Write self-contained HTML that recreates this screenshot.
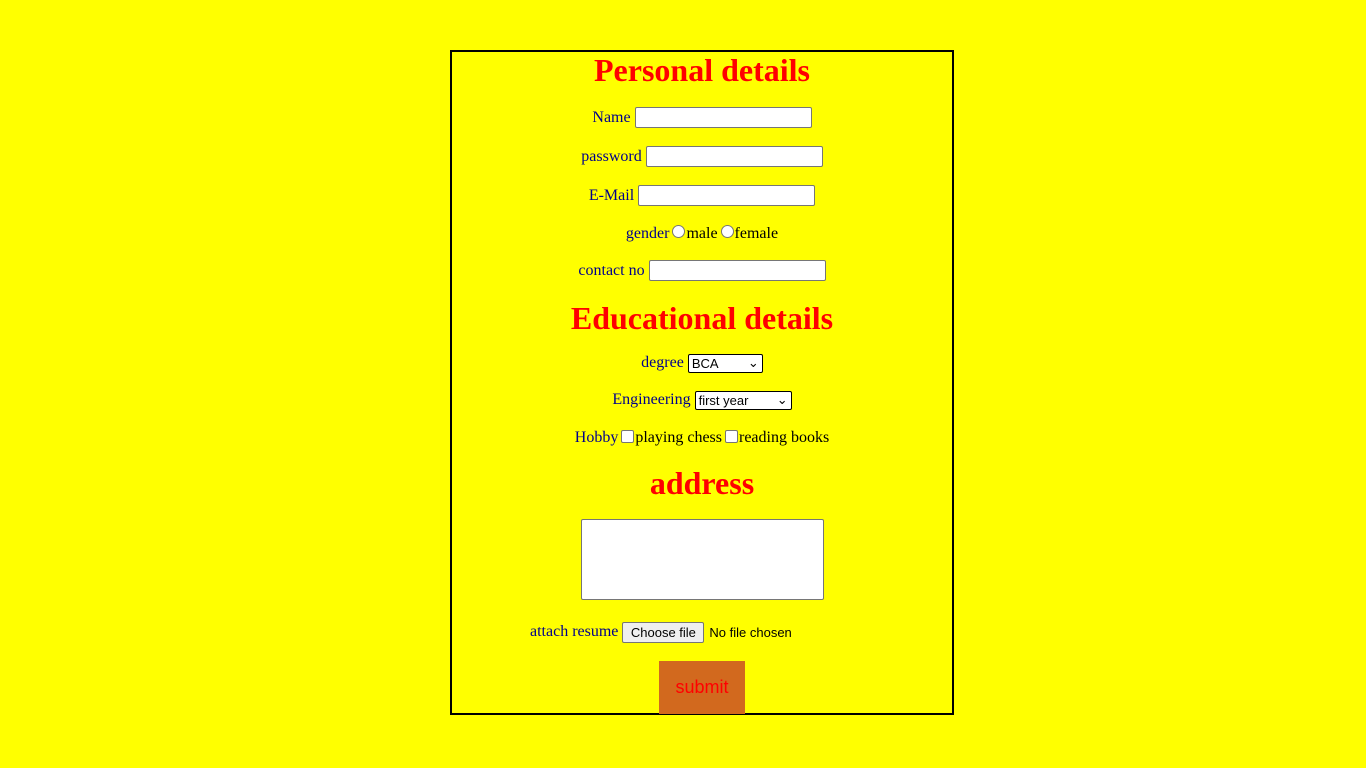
<!DOCTYPE html>
<html><head><style>
body{margin:0;background:#ff0;width:1366px;height:768px;position:relative;overflow:hidden;font-family:"Liberation Serif",serif;font-size:16px}
#box{position:absolute;left:450px;top:50px;width:500px;height:661px;border:2px solid #000}
.r{position:absolute;left:450px;width:504px;display:flex;justify-content:center;align-items:center;color:#00008b;white-space:nowrap}
h2{position:absolute;left:450px;width:504px;margin:0;text-align:center;color:red;font-size:32px;font-weight:bold;line-height:40px}
.in{width:175px;height:19px;border:1px solid #767676;border-radius:2px;background:#fff;margin-left:4px}
.blk{color:#000}
.rad{width:11px;height:11px;border:1px solid #767676;border-radius:50%;background:#fff;display:inline-block;margin:0 1px 0 3px;position:relative;top:-3px}
.chk{width:11px;height:11px;border:1px solid #767676;border-radius:2px;background:#fff;display:inline-block;margin:0 1px 0 3px;position:relative;top:-2px}
.sel{border:1px solid #000;border-radius:2px;background:#fff;margin-left:4px;font:13px "Liberation Sans",sans-serif;color:#000;display:flex;align-items:center;justify-content:space-between;padding:0 3px;box-sizing:border-box;height:19px}
</style></head><body>
<div id="box"></div>
<h2 style="top:50px">Personal details</h2>
<div class="r" style="top:106px;height:23px">Name<div class="in"></div></div>
<div class="r" style="top:145px;height:23px">password<div class="in"></div></div>
<div class="r" style="top:184px;height:23px">E-Mail<div class="in"></div></div>
<div class="r" style="top:223px;height:22px">gender<span class="rad"></span><span class="blk">male</span><span class="rad"></span><span class="blk">female</span></div>
<div class="r" style="top:259px;height:23px">contact no<div class="in"></div></div>
<h2 style="top:298px">Educational details</h2>
<div class="r" style="top:353px;height:20px">degree<div class="sel" style="width:75px"><span>BCA</span><span>⌄</span></div></div>
<div class="r" style="top:390px;height:20px">Engineering<div class="sel" style="width:97px"><span>first year</span><span>⌄</span></div></div>
<div class="r" style="top:427px;height:22px">Hobby<span class="chk"></span><span class="blk">playing chess</span><span class="chk"></span><span class="blk">reading books</span></div>
<h2 style="top:463px">address</h2>
<div style="position:absolute;left:581px;top:519px;width:241px;height:79px;border:1px solid #767676;background:#fff;border-radius:2px"></div>
<div style="position:absolute;left:530px;top:621px;height:22px;display:flex;align-items:center;color:#00008b;white-space:nowrap">attach resume<div style="margin-left:4px;width:80px;height:19px;border:1px solid #767676;border-radius:2px;background:#efefef;font:13px 'Liberation Sans',sans-serif;color:#000;display:flex;align-items:center;justify-content:center">Choose file</div><span style="font:13px 'Liberation Sans',sans-serif;color:#000;margin-left:5px">No file chosen</span></div>
<div style="position:absolute;left:659px;top:661px;width:86px;height:53px;background:#d2691e;color:red;font:18px 'Liberation Sans',sans-serif;display:flex;align-items:center;justify-content:center">submit</div>
</body></html>
